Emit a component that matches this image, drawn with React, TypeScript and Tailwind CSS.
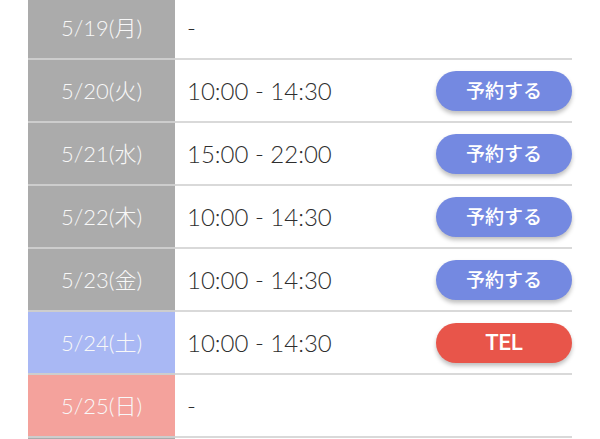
import React from "react";

type Row = { date: string; time: string; kind: "none" | "reserve" | "tel"; day: "wd" | "sat" | "sun" };

const rows: Row[] = [
  { date: "5/19(月)", time: "-", kind: "none", day: "wd" },
  { date: "5/20(火)", time: "10:00 - 14:30", kind: "reserve", day: "wd" },
  { date: "5/21(水)", time: "15:00 - 22:00", kind: "reserve", day: "wd" },
  { date: "5/22(木)", time: "10:00 - 14:30", kind: "reserve", day: "wd" },
  { date: "5/23(金)", time: "10:00 - 14:30", kind: "reserve", day: "wd" },
  { date: "5/24(土)", time: "10:00 - 14:30", kind: "tel", day: "sat" },
  { date: "5/25(日)", time: "-", kind: "none", day: "sun" },
  { date: "5/26(月)", time: "-", kind: "none", day: "wd" },
];

const latin = { fontFamily: 'Lato, "Noto Sans CJK JP", sans-serif' };

export default function App() {
  return (
    <div
      className="w-[600px] h-[439px] overflow-hidden bg-white"
      style={{ fontFamily: '"Noto Sans CJK JP", "Noto Sans", sans-serif' }}
    >
      <div className="ml-[28px] w-[544px] -mt-[3px]">
        {rows.map((r, i) => (
          <div key={i} className="flex h-[63px]">
            <div
              style={latin}
              className={
                "w-[147px] flex items-center justify-center text-[22px] font-light text-[#f8f8f8] border-b-2 border-[#cdcdcd] " +
                (r.day === "sat" ? "bg-[#a9b8f4]" : r.day === "sun" ? "bg-[#f4a29c]" : "bg-[#ababab]")
              }
            >
              {r.date}
            </div>
            <div className="flex-1 flex items-center justify-between pl-[12px] border-b-2 border-[#d9d9d9]">
              <span style={latin} className="text-[24px] font-light text-[#2e2e2e]">
                {r.time}
              </span>
              {r.kind === "reserve" && (
                <button className="w-[136px] h-[40px] rounded-full bg-[#7489e1] text-white text-[19px] font-medium shadow-[0_3px_4px_rgba(0,0,0,0.25)]">
                  予約する
                </button>
              )}
              {r.kind === "tel" && (
                <button
                  style={{ fontFamily: 'Roboto, sans-serif' }}
                  className="w-[136px] h-[40px] rounded-full bg-[#e8554a] text-white text-[22px] font-medium shadow-[0_3px_4px_rgba(0,0,0,0.25)]"
                >
                  TEL
                </button>
              )}
            </div>
          </div>
        ))}
      </div>
    </div>
  );
}
